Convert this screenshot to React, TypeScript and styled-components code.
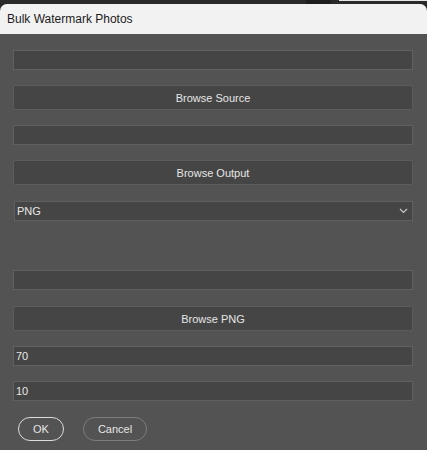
import * as React from "react";
import styled, { createGlobalStyle } from "styled-components";

const GlobalStyle = createGlobalStyle`
  html, body {
    margin: 0;
    padding: 0;
    background: #535353;
  }
  body {
    font-family: "Liberation Sans", Arial, sans-serif;
  }
`;

const Screen = styled.div`
  width: 427px;
  height: 450px;
  display: flex;
  flex-direction: column;
  background: #262626;
  overflow: hidden;
`;

const TopStrip = styled.div`
  height: 4px;
  display: flex;
  flex-shrink: 0;
`;

const StripPart = styled.div<{ $w: number; $color: string; $line?: boolean }>`
  width: ${(p) => p.$w}px;
  background: ${(p) => p.$color};
  border-top: ${(p) => (p.$line ? "1px solid #e8e8e8" : "none")};
  box-sizing: border-box;
`;

const Dialog = styled.section`
  flex: 1;
  display: flex;
  flex-direction: column;
  background: #535353;
  border-radius: 7px 7px 0 0;
  overflow: hidden;
`;

const TitleBar = styled.header`
  height: 30px;
  flex-shrink: 0;
  background: #f2f2f2;
  display: flex;
  align-items: center;
  padding-left: 7px;
  font-size: 12px;
  color: #1b1b1b;
`;

const Body = styled.div`
  display: flex;
  flex-direction: column;
  gap: 15px;
  padding: 16px 14px 0 13px;
`;

const TextField = styled.input`
  box-sizing: border-box;
  width: 100%;
  height: 20px;
  margin: 0;
  padding: 0 2px;
  border: 1px solid #606060;
  background: #454545;
  color: #e8e8e8;
  font-family: "Liberation Sans", Arial, sans-serif;
  font-size: 11px;
  outline: none;
`;

const BrowseButton = styled.button<{ $offset?: number }>`
  box-sizing: border-box;
  width: 100%;
  height: 25px;
  margin: ${(p) => p.$offset || 0}px 0 0 0;
  padding: 0;
  border: 1px solid #5c5c5c;
  border-radius: 2px;
  background: #454545;
  color: #e6e6e6;
  font-family: "Liberation Sans", Arial, sans-serif;
  font-size: 11px;
`;

const Select = styled.div`
  box-sizing: border-box;
  height: 20px;
  margin: 1px 0 0 1px;
  padding: 0 4px 0 2px;
  display: flex;
  align-items: center;
  justify-content: space-between;
  border: 1px solid #606060;
  background: #454545;
  color: #e8e8e8;
  font-size: 11px;
`;

const Spacer = styled.div`
  height: 19px;
`;

const Footer = styled.div`
  display: flex;
  align-items: center;
  margin-top: 1px;
  padding-left: 5px;
  gap: 19px;
`;

const PillButton = styled.button<{ $primary?: boolean; $w: number }>`
  box-sizing: border-box;
  width: ${(p) => p.$w}px;
  height: 24px;
  padding: 0;
  border-radius: 12px;
  border: ${(p) => (p.$primary ? "1.5px solid #dcdcdc" : "1px solid #7c7c7c")};
  background: transparent;
  color: #e6e6e6;
  font-family: "Liberation Sans", Arial, sans-serif;
  font-size: 11px;
`;

const Chevron = () => (
  <svg width="9" height="6" viewBox="0 0 9 6">
    <path d="M1 1 L4.5 4.5 L8 1" fill="none" stroke="#c8c8c8" strokeWidth="1.2" />
  </svg>
);

export default function App() {
  return (
    <Screen>
      <GlobalStyle />
      <TopStrip>
        <StripPart $w={306} $color="#2a2a2a" />
        <StripPart $w={25} $color="#1e1e1e" />
        <StripPart $w={8} $color="#2a2a2a" />
        <StripPart $w={88} $color="#2a2a2a" $line />
      </TopStrip>
      <Dialog>
        <TitleBar>Bulk Watermark Photos</TitleBar>
        <Body>
          <TextField readOnly value="" />
          <BrowseButton>Browse Source</BrowseButton>
          <TextField readOnly value="" />
          <BrowseButton>Browse Output</BrowseButton>
          <Select>
            <span>PNG</span>
            <Chevron />
          </Select>
          <Spacer />
          <TextField readOnly value="" />
          <BrowseButton $offset={1}>Browse PNG</BrowseButton>
          <TextField readOnly value="70" />
          <TextField readOnly value="10" />
          <Footer>
            <PillButton $primary $w={46}>OK</PillButton>
            <PillButton $w={64}>Cancel</PillButton>
          </Footer>
        </Body>
      </Dialog>
    </Screen>
  );
}
